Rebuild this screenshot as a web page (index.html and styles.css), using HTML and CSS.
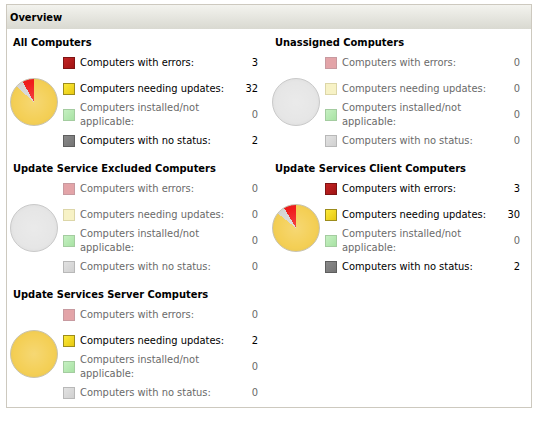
FILE: index.html
```html
<!DOCTYPE html>
<html>
<head>
<meta charset="utf-8">
<link rel="stylesheet" href="styles.css">
</head>
<body>
<div class="panel">
  <div class="header">Overview</div>
  <div class="groups">
    <section class="group">
      <h2 class="title">All Computers</h2>
      <div class="body">
        <div class="pie pie-all"></div>
        <div class="rows">
          <span class="sw err on"></span><span class="lbl on">Computers with errors:</span><span class="num on">3</span>
          <span class="sw upd on"></span><span class="lbl on">Computers needing updates:</span><span class="num on">32</span>
          <span class="sw ok"></span><span class="lbl">Computers installed/not applicable:</span><span class="num">0</span>
          <span class="sw none on"></span><span class="lbl on">Computers with no status:</span><span class="num on">2</span>
        </div>
      </div>
    </section>
    <section class="group">
      <h2 class="title">Unassigned Computers</h2>
      <div class="body">
        <div class="pie pie-empty"></div>
        <div class="rows">
          <span class="sw err"></span><span class="lbl">Computers with errors:</span><span class="num">0</span>
          <span class="sw upd"></span><span class="lbl">Computers needing updates:</span><span class="num">0</span>
          <span class="sw ok"></span><span class="lbl">Computers installed/not applicable:</span><span class="num">0</span>
          <span class="sw none"></span><span class="lbl">Computers with no status:</span><span class="num">0</span>
        </div>
      </div>
    </section>
    <section class="group">
      <h2 class="title">Update Service Excluded Computers</h2>
      <div class="body">
        <div class="pie pie-empty"></div>
        <div class="rows">
          <span class="sw err"></span><span class="lbl">Computers with errors:</span><span class="num">0</span>
          <span class="sw upd"></span><span class="lbl">Computers needing updates:</span><span class="num">0</span>
          <span class="sw ok"></span><span class="lbl">Computers installed/not applicable:</span><span class="num">0</span>
          <span class="sw none"></span><span class="lbl">Computers with no status:</span><span class="num">0</span>
        </div>
      </div>
    </section>
    <section class="group">
      <h2 class="title">Update Services Client Computers</h2>
      <div class="body">
        <div class="pie pie-client"></div>
        <div class="rows">
          <span class="sw err on"></span><span class="lbl on">Computers with errors:</span><span class="num on">3</span>
          <span class="sw upd on"></span><span class="lbl on">Computers needing updates:</span><span class="num on">30</span>
          <span class="sw ok"></span><span class="lbl">Computers installed/not applicable:</span><span class="num">0</span>
          <span class="sw none on"></span><span class="lbl on">Computers with no status:</span><span class="num on">2</span>
        </div>
      </div>
    </section>
    <section class="group">
      <h2 class="title">Update Services Server Computers</h2>
      <div class="body">
        <div class="pie pie-full"></div>
        <div class="rows">
          <span class="sw err"></span><span class="lbl">Computers with errors:</span><span class="num">0</span>
          <span class="sw upd on"></span><span class="lbl on">Computers needing updates:</span><span class="num on">2</span>
          <span class="sw ok"></span><span class="lbl">Computers installed/not applicable:</span><span class="num">0</span>
          <span class="sw none"></span><span class="lbl">Computers with no status:</span><span class="num">0</span>
        </div>
      </div>
    </section>
  </div>
</div>
</body>
</html>
```

FILE: styles.css
```css
html, body {
  margin: 0;
  padding: 0;
  background: #fff;
}
body {
  font-family: "DejaVu Sans Condensed", "Liberation Sans", sans-serif;
  font-size: 11px;
  color: #000;
}
.panel {
  margin: 4px 0 0 6px;
  width: 524px;
  height: 402px;
  border: 1px solid #cdc9bf;
}
.header {
  height: 24px;
  line-height: 25px;
  padding-left: 3px;
  font-weight: bold;
  background: linear-gradient(#f3f3ee, #d9d9d1);
}
.groups {
  display: grid;
  grid-template-columns: 262px 262px;
  row-gap: 8px;
  padding-top: 7px;
}
.title {
  margin: 0;
  padding-left: 6px;
  font-size: 11px;
  line-height: 14px;
  font-weight: bold;
  white-space: nowrap;
}
.body {
  display: flex;
  align-items: center;
}
.pie {
  flex: none;
  width: 46px;
  height: 46px;
  margin: 0 5px 0 3px;
  border-radius: 50%;
  border: 1px solid #c8c3b0;
  position: relative;
}
.pie::after {
  content: "";
  position: absolute;
  inset: 0;
  border-radius: 50%;
  background: radial-gradient(circle at 50% 50%, rgba(255,255,255,0.18) 0%, rgba(255,255,255,0) 60%, rgba(0,0,0,0.07) 100%);
}
.pie-all {
  background: conic-gradient(#f4cf55 0deg 311.4deg, #d6d6d6 311.4deg 330.8deg, #f01c1c 330.8deg 360deg);
}
.pie-client {
  background: conic-gradient(#f4cf55 0deg 308.6deg, #d6d6d6 308.6deg 329.1deg, #f01c1c 329.1deg 360deg);
}
.pie-full {
  background: #f4cf55;
}
.pie-empty {
  background: #e6e6e6;
  border-color: #c9c9c9;
}
.rows {
  flex: 1;
  display: grid;
  grid-template-columns: 12px 1fr 24px;
  grid-auto-rows: 26px;
  column-gap: 5px;
  align-items: center;
  padding-right: 11px;
  line-height: 14px;
}
.sw {
  width: 10px;
  height: 10px;
  border: 1px solid;
}
.sw.err { background: #e3a4a8; border-color: #c79aa0; }
.sw.err.on { background: linear-gradient(135deg, #c42424, #a01414); border-color: #7e1414; }
.sw.upd { background: #f7f2c6; border-color: #dcd6a8; }
.sw.upd.on { background: linear-gradient(135deg, #fbe93a, #e8c810); border-color: #9c8c1c; }
.sw.ok { background: linear-gradient(135deg, #c6f0c2, #a8e2a4); border-color: #a4cca0; }
.sw.none { background: linear-gradient(135deg, #e2e2e2, #d0d0d0); border-color: #b8b8b8; }
.sw.none.on { background: linear-gradient(135deg, #8a8a8a, #747474); border-color: #5e5e5e; }
.lbl {
  color: #6a6a6a;
}
.num {
  text-align: right;
  color: #6a6a6a;
}
.lbl.on, .num.on {
  color: #000;
}
```
